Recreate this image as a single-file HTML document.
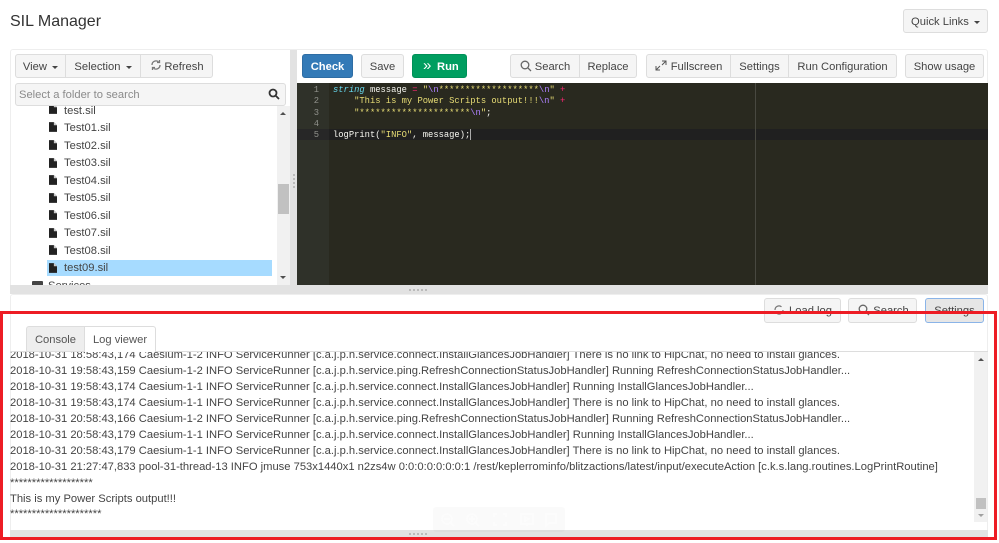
<!DOCTYPE html>
<html><head><meta charset="utf-8"><style>
html,body{margin:0;padding:0;background:#fff}
body{width:999px;height:543px;position:relative;overflow:hidden;font-family:"Liberation Sans",sans-serif;color:#333}
.a{position:absolute;box-sizing:border-box;white-space:nowrap}
.b{position:absolute;box-sizing:border-box;height:24px;border:1px solid #ddd;background:#f5f5f5;border-radius:3px;font-size:11.2px;line-height:22px;padding-top:1px;text-align:center;white-space:nowrap;color:#444}
.c{display:inline-block;width:0;height:0;border-left:3px solid transparent;border-right:3px solid transparent;border-top:3px solid #444;vertical-align:middle;margin-left:2px}
.t{position:absolute;left:64px;margin-top:1px;font-size:11.2px;line-height:16px;color:#444;white-space:nowrap}
.f{position:absolute;left:49px;width:8px;height:10px}
.l{position:absolute;left:10px;margin-top:1px;font-size:11.2px;line-height:16px;color:#444;white-space:pre}
.m{position:absolute;left:333px;margin-top:1px;font-family:"Liberation Mono",monospace;font-size:8.8px;line-height:11px;color:#f8f8f2;white-space:pre}
.n{position:absolute;left:295px;margin-top:1px;width:24px;text-align:right;font-family:"Liberation Mono",monospace;font-size:8.8px;line-height:11px;color:#8f908a}
.y{color:#e6db74}.v{color:#ae81ff}.r{color:#f92672}
</style></head><body>
<div class="a" style="left:10px;top:12px;font-size:16px;line-height:20px;color:#333">SIL Manager</div>
<div class="b" style="left:903px;top:9px;width:85px;">Quick Links <span class="c"></span></div>

<div class="a" style="left:10px;top:49px;width:978px;height:240px;border:1px solid #eee;border-radius:3px"></div>
<div class="a" style="left:290px;top:50px;width:7px;height:235px;background:#e2e2e2"></div>
<div class="a" style="left:293px;top:174px;width:2px;height:14px;border-left:2px dotted #bbb"></div>

<div class="b" style="left:15px;top:54px;width:51px;border-radius:3px 0 0 3px">View <span class="c"></span></div>
<div class="b" style="left:65px;top:54px;width:76px;border-radius:0">Selection <span class="c"></span></div>
<div class="b" style="left:140px;top:54px;width:73px;border-radius:0 3px 3px 0;padding-left:15px">Refresh</div>
<svg class="a" style="left:150px;top:59px" width="12" height="12" viewBox="0 0 12 12" fill="none" stroke="#777" stroke-width="1.3"><path d="M2 6a4 4 0 0 1 6.500-3.200M10 6a4 4 0 0 1-6.500 3.200"/><path d="M9.500 1v2.500H7M2.500 11V8.500H5"/></svg>
<div class="a" style="left:15px;top:83px;width:271px;height:23px;border:1px solid #ddd;border-radius:3px;background:#f5f5f5;font-size:11.2px;line-height:23px;color:#8a8a8a;padding-left:3px">Select a folder to search</div>
<svg class="a" style="left:268px;top:88px" width="12" height="12" viewBox="0 0 12 12" fill="none" stroke="#333" stroke-width="1.8"><circle cx="5" cy="5" r="3.500"/><path d="M7.500 7.500L11 11"/></svg>

<div class="a" style="left:10px;top:106px;width:280px;height:179px;overflow:hidden">
<div class="a" style="left:37px;top:154px;width:225px;height:16px;background:#a6dbff"></div>
<svg class="f" style="left:39px;top:-2px" viewBox="0 0 9 11"><path d="M0 0h5.500L9 3.500V11H0z" fill="#222"/><path d="M5.500 0v3.500H9" fill="#ccc"/></svg>
<div class="t" style="left:54px;top:-4px">test.sil</div>
<svg class="f" style="left:39px;top:15.500px" viewBox="0 0 9 11"><path d="M0 0h5.500L9 3.500V11H0z" fill="#222"/><path d="M5.500 0v3.500H9" fill="#ccc"/></svg>
<div class="t" style="left:54px;top:13px">Test01.sil</div>
<svg class="f" style="left:39px;top:34px" viewBox="0 0 9 11"><path d="M0 0h5.500L9 3.500V11H0z" fill="#222"/><path d="M5.500 0v3.500H9" fill="#ccc"/></svg>
<div class="t" style="left:54px;top:31px">Test02.sil</div>
<svg class="f" style="left:39px;top:51.500px" viewBox="0 0 9 11"><path d="M0 0h5.500L9 3.500V11H0z" fill="#222"/><path d="M5.500 0v3.500H9" fill="#ccc"/></svg>
<div class="t" style="left:54px;top:48px">Test03.sil</div>
<svg class="f" style="left:39px;top:69px" viewBox="0 0 9 11"><path d="M0 0h5.500L9 3.500V11H0z" fill="#222"/><path d="M5.500 0v3.500H9" fill="#ccc"/></svg>
<div class="t" style="left:54px;top:66px">Test04.sil</div>
<svg class="f" style="left:39px;top:86.500px" viewBox="0 0 9 11"><path d="M0 0h5.500L9 3.500V11H0z" fill="#222"/><path d="M5.500 0v3.500H9" fill="#ccc"/></svg>
<div class="t" style="left:54px;top:83px">Test05.sil</div>
<svg class="f" style="left:39px;top:104px" viewBox="0 0 9 11"><path d="M0 0h5.500L9 3.500V11H0z" fill="#222"/><path d="M5.500 0v3.500H9" fill="#ccc"/></svg>
<div class="t" style="left:54px;top:101px">Test06.sil</div>
<svg class="f" style="left:39px;top:121.500px" viewBox="0 0 9 11"><path d="M0 0h5.500L9 3.500V11H0z" fill="#222"/><path d="M5.500 0v3.500H9" fill="#ccc"/></svg>
<div class="t" style="left:54px;top:118px">Test07.sil</div>
<svg class="f" style="left:39px;top:139px" viewBox="0 0 9 11"><path d="M0 0h5.500L9 3.500V11H0z" fill="#222"/><path d="M5.500 0v3.500H9" fill="#ccc"/></svg>
<div class="t" style="left:54px;top:136px">Test08.sil</div>
<svg class="f" style="left:39px;top:156.500px" viewBox="0 0 9 11"><path d="M0 0h5.500L9 3.500V11H0z" fill="#222"/><path d="M5.500 0v3.500H9" fill="#ccc"/></svg>
<div class="t" style="left:54px;top:153px">test09.sil</div>
<div class="a" style="left:22px;top:175px;width:11px;height:8px;background:#444;border-radius:1px"></div>
<div class="t" style="left:38px;top:171px">Services</div>
</div>
<div class="a" style="left:277px;top:106px;width:13px;height:179px;background:#f1f1f1"></div>
<div class="a" style="left:280px;top:112px;width:0;height:0;border-left:3px solid transparent;border-right:3px solid transparent;border-bottom:3px solid #505050"></div>
<div class="a" style="left:280px;top:276px;width:0;height:0;border-left:3px solid transparent;border-right:3px solid transparent;border-top:3px solid #505050"></div>
<div class="a" style="left:278px;top:184px;width:11px;height:30px;background:#c1c1c1"></div>

<div class="b" style="left:302px;top:54px;width:51px;background:#337ab7;border-color:#2e6da4;color:#fff;font-weight:bold">Check</div>
<div class="b" style="left:361px;top:54px;width:43px">Save</div>
<div class="b" style="left:412px;top:54px;width:55px;background:#009e60;border-color:#009058;color:#fff;font-weight:bold"><span style="position:absolute;left:10px;top:0;font-size:15px;font-weight:normal">»</span><span style="position:absolute;left:24px;top:1px">Run</span></div>
<div class="b" style="left:510px;top:54px;width:70px;border-radius:3px 0 0 3px;padding-left:15px">Search</div>
<svg class="a" style="left:520px;top:60px" width="12" height="12" viewBox="0 0 12 12" fill="none" stroke="#666" stroke-width="1.300"><circle cx="5" cy="5" r="3.800"/><path d="M7.800 7.800L11 11"/></svg>
<div class="b" style="left:579px;top:54px;width:58px;border-radius:0 3px 3px 0">Replace</div>
<div class="b" style="left:646px;top:54px;width:85px;border-radius:3px 0 0 3px;padding-left:16px">Fullscreen</div>
<svg class="a" style="left:655px;top:60px" width="12" height="11" viewBox="0 0 12 11" fill="none" stroke="#555" stroke-width="1"><path d="M7 1h4v4M11 1L7 5M1 6v4h4M1 10l4-4"/></svg>
<div class="b" style="left:730px;top:54px;width:59px;border-radius:0">Settings</div>
<div class="b" style="left:788px;top:54px;width:109px;border-radius:0 3px 3px 0">Run Configuration</div>
<div class="b" style="left:905px;top:54px;width:79px">Show usage</div>

<div class="a" style="left:297px;top:83px;width:691px;height:202px;background:#29291f"></div>
<div class="a" style="left:297px;top:83px;width:32px;height:202px;background:#2f3129"></div>
<div class="a" style="left:297px;top:129px;width:32px;height:11px;background:#272727"></div>
<div class="a" style="left:329px;top:129px;width:659px;height:11px;background:#202020"></div>
<div class="a" style="left:755px;top:83px;width:1px;height:202px;background:#484840"></div>
<div class="n" style="top:84px">1</div><div class="n" style="top:95px">2</div><div class="n" style="top:106.500px">3</div><div class="n" style="top:118px">4</div><div class="n" style="top:129px">5</div>
<div class="m" style="top:84px"><span style="color:#66d9ef;font-style:italic">string</span> message <span class="r">=</span> <span class="y">"<span class="v">\n</span>*******************<span class="v">\n</span>"</span> <span class="r">+</span></div>
<div class="m" style="top:95px">    <span class="y">"This is my Power Scripts output!!!<span class="v">\n</span>"</span> <span class="r">+</span></div>
<div class="m" style="top:106.500px">    <span class="y">"*********************<span class="v">\n</span>"</span>;</div>
<div class="m" style="top:129px">logPrint(<span class="y">"INFO"</span>, message);</div>
<div class="a" style="left:470px;top:129px;width:1px;height:11px;background:#aaa"></div>

<div class="a" style="left:10px;top:285px;width:978px;height:9px;background:#e2e2e2"></div>
<div class="a" style="left:409px;top:289px;width:18px;height:2px;border-top:2px dotted #bbb"></div>

<div class="a" style="left:10px;top:294px;width:978px;height:245px;border:1px solid #eee;border-radius:3px"></div>
<div class="b" style="left:764px;top:298px;width:77px;height:25px;padding-left:16px">Load log</div>
<svg class="a" style="left:773px;top:304px" width="12" height="12" viewBox="0 0 12 12" fill="none" stroke="#777" stroke-width="1.200"><path d="M2 6a4 4 0 0 1 6.500-3.200M10 6a4 4 0 0 1-6.500 3.200"/></svg>
<div class="b" style="left:848px;top:298px;width:69px;height:25px;padding-left:17px">Search</div>
<svg class="a" style="left:858px;top:304px" width="12" height="12" viewBox="0 0 12 12" fill="none" stroke="#666" stroke-width="1.300"><circle cx="5" cy="5" r="3.800"/><path d="M7.800 7.800L11 11"/></svg>
<div class="b" style="left:925px;top:298px;width:59px;height:25px;border-color:#8ab4e8;background:#e6e6e6">Settings</div>

<div class="a" style="left:26px;top:326px;width:59px;height:25px;background:#eee;border:1px solid #ddd;border-bottom:0;border-radius:3px 0 0 0;font-size:11.2px;line-height:26px;text-align:center;color:#555">Console</div>
<div class="a" style="left:85px;top:326px;width:71px;height:26px;background:#fff;border:1px solid #ddd;border-left:0;border-bottom:0;border-radius:0 3px 0 0;font-size:11.2px;line-height:26px;text-align:center;color:#555">Log viewer</div>
<div class="a" style="left:10px;top:351px;width:978px;height:1px;background:#ddd"></div>
<div class="a" style="left:85px;top:351px;width:70px;height:1px;background:#fff"></div>

<div class="a" style="left:0;top:352px;width:974px;height:178px;overflow:hidden">
<div class="l" style="top:-6px">2018-10-31 18:58:43,174 Caesium-1-2 INFO ServiceRunner [c.a.j.p.h.service.connect.InstallGlancesJobHandler] There is no link to HipChat, no need to install glances.</div>
<div class="l" style="top:10px">2018-10-31 19:58:43,159 Caesium-1-2 INFO ServiceRunner [c.a.j.p.h.service.ping.RefreshConnectionStatusJobHandler] Running RefreshConnectionStatusJobHandler...</div>
<div class="l" style="top:26px">2018-10-31 19:58:43,174 Caesium-1-1 INFO ServiceRunner [c.a.j.p.h.service.connect.InstallGlancesJobHandler] Running InstallGlancesJobHandler...</div>
<div class="l" style="top:42px">2018-10-31 19:58:43,174 Caesium-1-1 INFO ServiceRunner [c.a.j.p.h.service.connect.InstallGlancesJobHandler] There is no link to HipChat, no need to install glances.</div>
<div class="l" style="top:58px">2018-10-31 20:58:43,166 Caesium-1-2 INFO ServiceRunner [c.a.j.p.h.service.ping.RefreshConnectionStatusJobHandler] Running RefreshConnectionStatusJobHandler...</div>
<div class="l" style="top:74px">2018-10-31 20:58:43,179 Caesium-1-1 INFO ServiceRunner [c.a.j.p.h.service.connect.InstallGlancesJobHandler] Running InstallGlancesJobHandler...</div>
<div class="l" style="top:90px">2018-10-31 20:58:43,179 Caesium-1-1 INFO ServiceRunner [c.a.j.p.h.service.connect.InstallGlancesJobHandler] There is no link to HipChat, no need to install glances.</div>
<div class="l" style="top:106px">2018-10-31 21:27:47,833 pool-31-thread-13 INFO jmuse 753x1440x1 n2zs4w 0:0:0:0:0:0:0:1 /rest/keplerrominfo/blitzactions/latest/input/executeAction [c.k.s.lang.routines.LogPrintRoutine]</div>
<div class="l" style="top:122px">*******************</div>
<div class="l" style="top:138px">This is my Power Scripts output!!!</div>
<div class="l" style="top:153px">*********************</div>
</div>
<div class="a" style="left:974px;top:352px;width:13px;height:170px;background:#f1f1f1"></div>
<div class="a" style="left:978px;top:358px;width:0;height:0;border-left:3px solid transparent;border-right:3px solid transparent;border-bottom:3px solid #505050"></div>
<div class="a" style="left:978px;top:514px;width:0;height:0;border-left:3px solid transparent;border-right:3px solid transparent;border-top:3px solid #a0a0a0"></div>
<div class="a" style="left:976px;top:498px;width:10px;height:11px;background:#c1c1c1"></div>

<div class="a" style="left:10px;top:530px;width:978px;height:7px;background:#e2e2e2"></div>
<div class="a" style="left:409px;top:533px;width:18px;height:2px;border-top:2px dotted #bbb"></div>
<div class="a" style="left:433px;top:507px;width:132px;height:25px;background:rgba(0,0,0,.02);border-radius:3px"></div>
<svg class="a" style="left:440px;top:511px;opacity:.5" width="120" height="18" viewBox="0 0 120 18" fill="none" stroke="#fff" stroke-width="1.500"><circle cx="7" cy="8" r="5"/><path d="M11 12l3 3M4 8h6"/><circle cx="32" cy="8" r="5"/><path d="M36 12l3 3M29 8h6M32 5v6"/><path d="M54 6V3h3M63 3h3v3M66 11v3h-3M57 14h-3v-3"/><rect x="81" y="3" width="12" height="10"/><path d="M85 6l4 2-4 2zM87 13v2"/><path d="M106 3h10v9h-7l-3 3z"/></svg>

<div class="a" style="left:0;top:311px;width:997px;height:229px;border:3px solid #ed1c24"></div>
</body></html>
